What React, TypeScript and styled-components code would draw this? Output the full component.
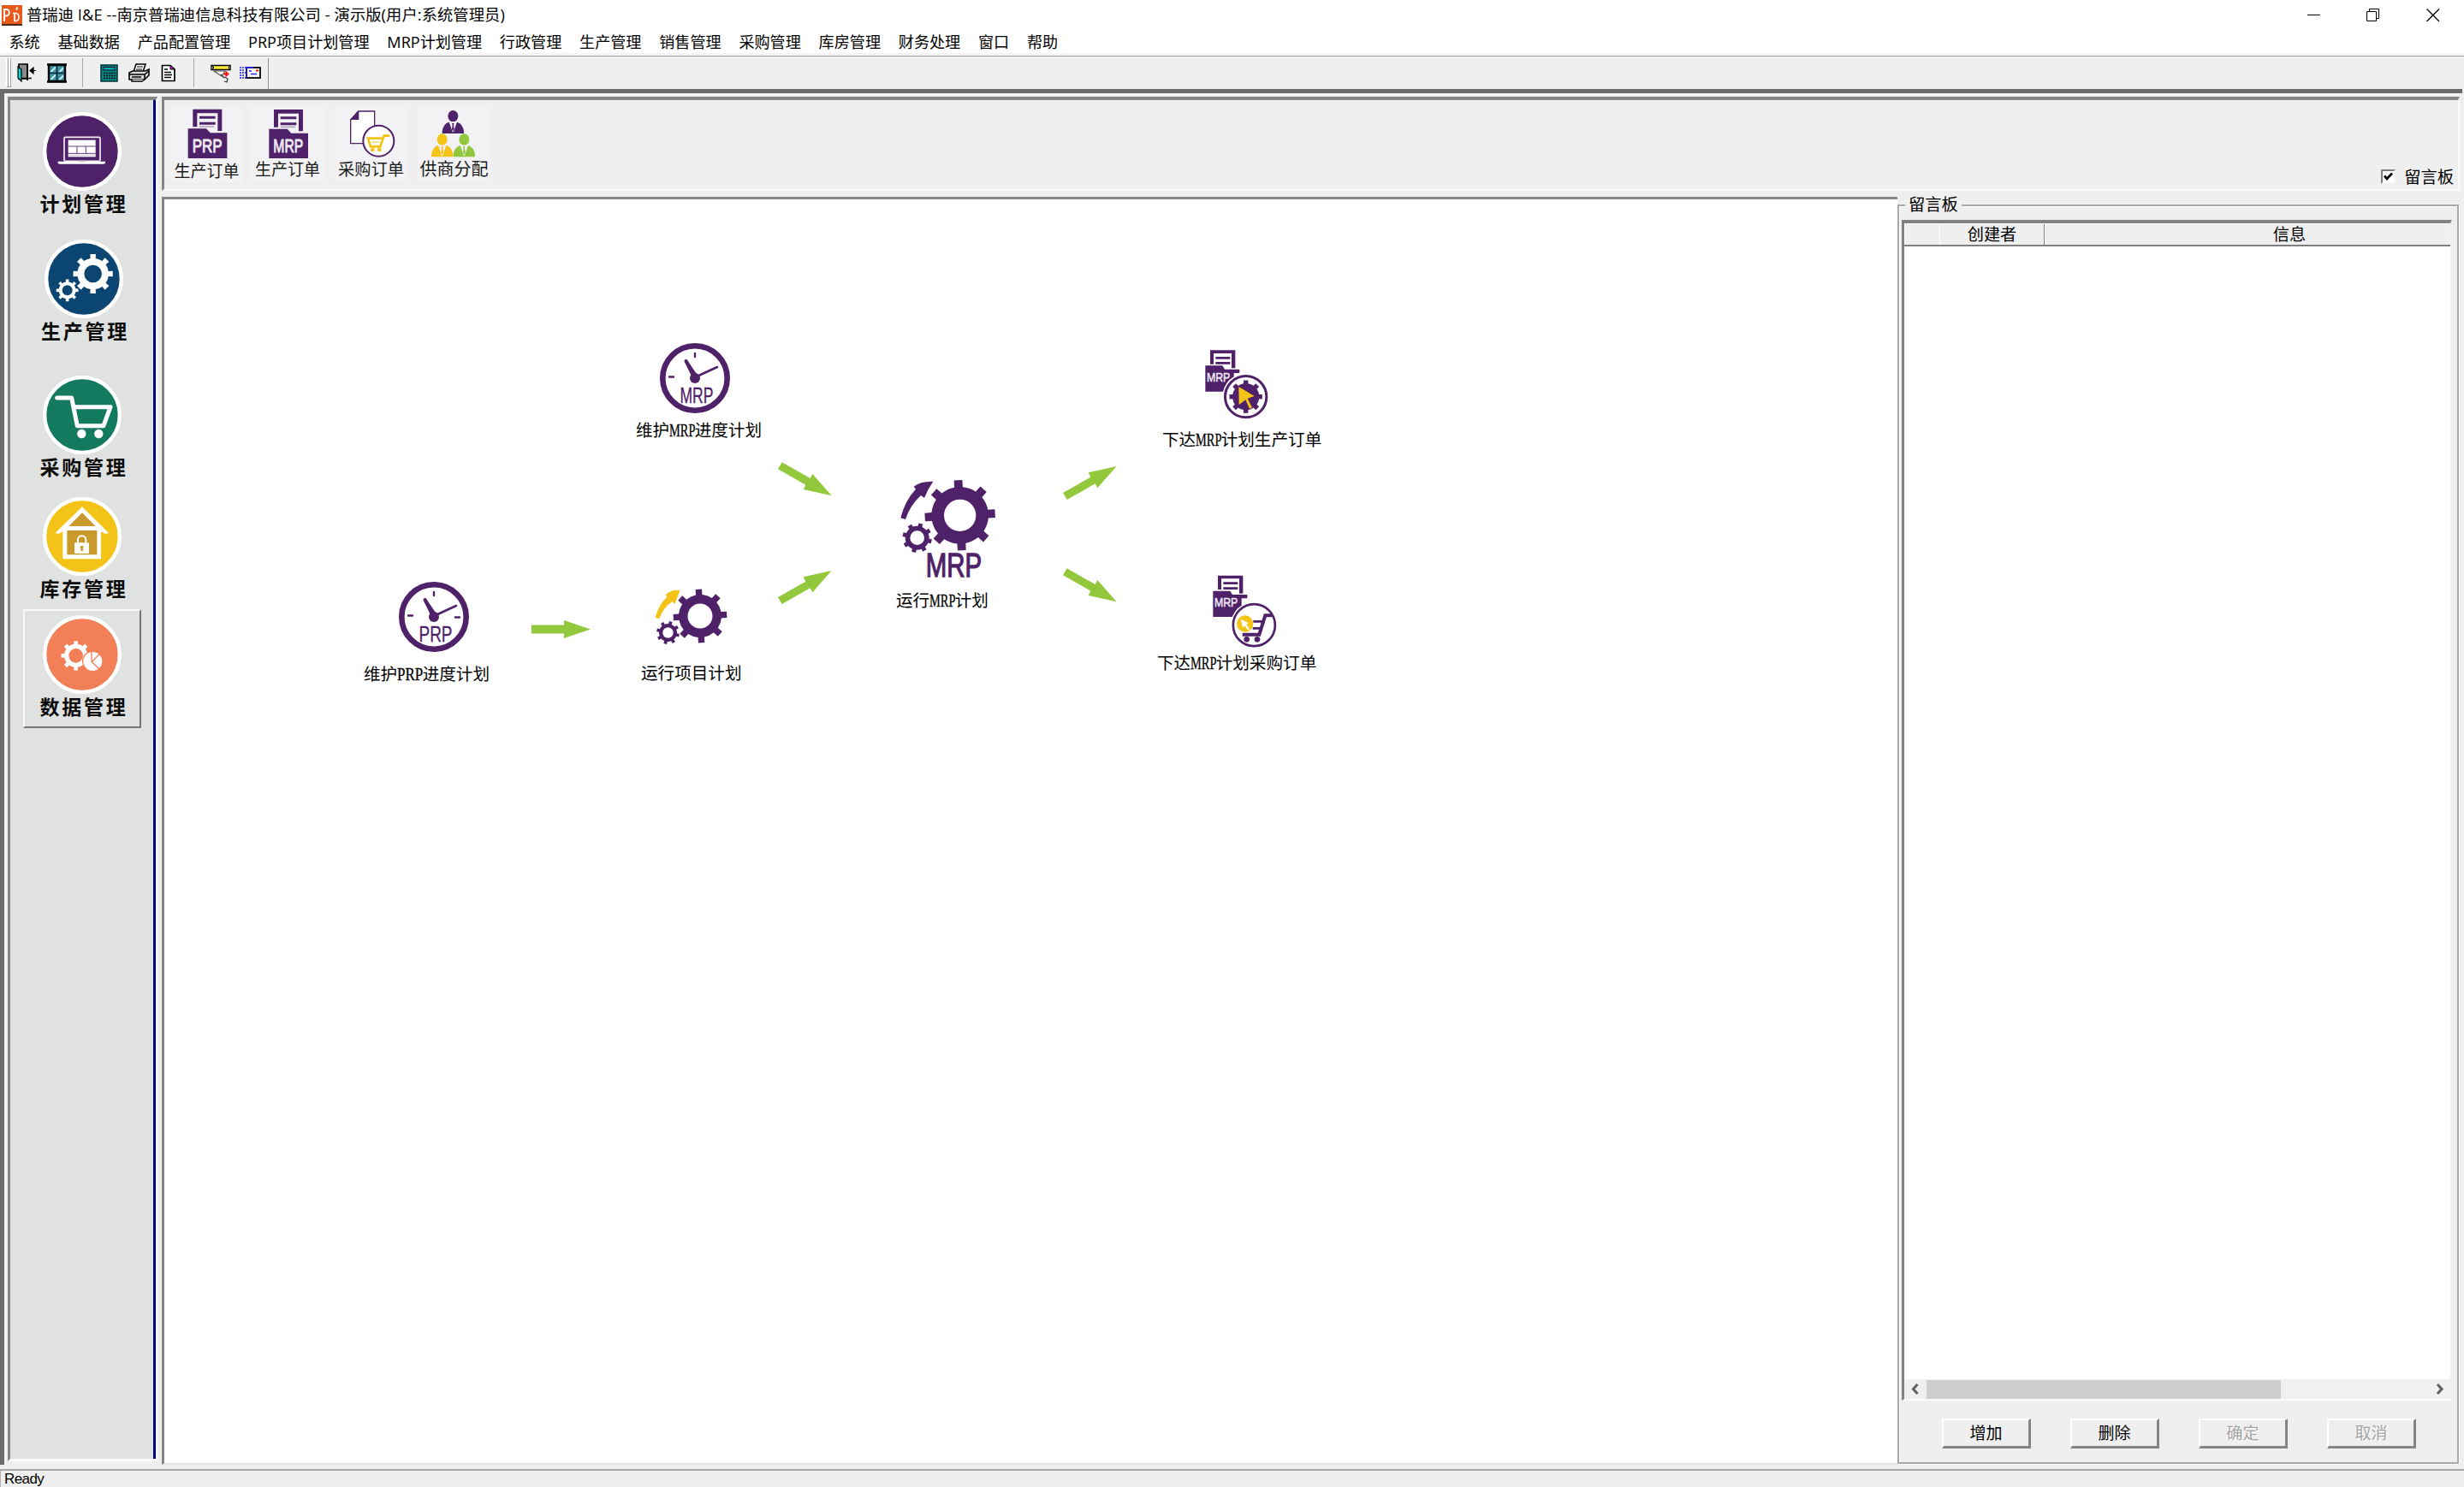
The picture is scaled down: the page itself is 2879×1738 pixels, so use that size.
import React from "react";
import styled, { createGlobalStyle, css } from "styled-components";

const PURPLE = "#4f2169";
const GREEN = "#93c83d";
const YELLOW = "#f3c417";
const FACE = "#efefef";
const CJK = `"Noto Sans CJK SC", sans-serif`;

const GlobalStyle = createGlobalStyle`
  * { box-sizing: border-box; }
  body { margin: 0; background: ${FACE}; }
`;

/* ---------- window frame ---------- */

const Window = styled.div`
  width: 2879px;
  height: 1738px;
  display: flex;
  flex-direction: column;
  overflow: hidden;
  background: ${FACE};
  color: #000;
  font: 18px/1 "Open Sans", ${CJK};
  white-space: nowrap;
`;

const TitleBar = styled.header`
  height: 35px;
  flex: none;
  display: flex;
  align-items: center;
  background: #fff;
  padding: 0 28px 0 2px;
`;

const Title = styled.h1`
  flex: 1;
  margin: -2px 0 0 5px;
  font: 400 18.3px/34px "Open Sans", ${CJK};
  letter-spacing: 0.07px;
`;

const WindowButtons = styled.div`
  display: flex;
  gap: 54px;
`;

const MenuBar = styled.nav`
  height: 27px;
  flex: none;
  display: flex;
  gap: 20.8px;
  padding-left: 10.5px;
  background: #fff;
  line-height: 28px;
  font-size: 18.1px;
`;

const Etch = styled.div`
  height: 6px;
  flex: none;
  border-top: 3px solid #f4f4f4;
  background: linear-gradient(#aaa 0 1px, #e2e2e2 1px 2px, #fff 2px);
`;

const ToolStrip = styled.div`
  height: 36px;
  flex: none;
  display: flex;
  align-items: flex-start;
  padding-left: 7px;
`;

const Grip = styled.i`
  width: 6px;
  height: 34px;
  border: solid #a0a0a0;
  border-width: 0 1px 1px 1px;
  border-left-color: #fff;
  box-shadow: inset -2px 0 #fff, inset -3px 0 #a0a0a0;
`;

const ToolGroup = styled.div<{ $w: number; $end?: boolean }>`
  position: relative;
  width: ${(p) => p.$w}px;
  height: ${(p) => (p.$end ? 36 : 34)}px;
  border-right: 1px solid ${(p) => (p.$end ? "#8c8c8c" : "#a8a8a8")};
`;

const SmallIcon = styled.svg<{ $x: number }>`
  position: absolute;
  left: ${(p) => p.$x}px;
  top: 6px;
  width: 26px;
  height: 24px;
`;

/* ---------- workspace ---------- */

const Workspace = styled.main`
  height: 1608px;
  flex: none;
  display: flex;
  gap: 5px;
  margin-right: 2px;
  border-style: solid;
  border-color: #6b6b6b transparent transparent #6b6b6b;
  border-width: 5px 0 0 5px;
  box-shadow: inset 2px 2px #f4f4f4;
  padding: 4px 3px 0 4px;
`;

const Sidebar = styled.aside`
  width: 175px;
  height: 1595px;
  flex: none;
  border: solid;
  border-width: 4px 2px 3px 3px;
  border-color: #858585 #f8f8f8 #fafafa #858585;
  background: #e0e2e1;
  box-shadow: inset -3px 0 #000082;
  padding: 7px 0 0 15px;
`;

const SideButton = styled.div<{ $gap: number; $active?: boolean }>`
  width: 138px;
  height: 139px;
  margin-top: ${(p) => p.$gap}px;
  border: solid transparent;
  border-width: 2px;
  display: flex;
  flex-direction: column;
  align-items: center;
  ${(p) =>
    p.$active &&
    css`
      border-color: #fafafa #767676 #767676 #fafafa;
    `}
`;

const SideIcon = styled.svg<{ $shift?: number }>`
  width: 94px;
  height: 94px;
  flex: none;
  margin: 4px 0 0 ${(p) => p.$shift ?? 0}px;
`;

const SideLabel = styled.span<{ $shift?: number }>`
  margin: -1px 0 0 ${(p) => 4 + (p.$shift ?? 0)}px;
  font: 700 23px/28px ${CJK};
  letter-spacing: 2.7px;
  color: #0c0c0c;
`;

const Main = styled.section`
  flex: 1;
  display: flex;
  flex-direction: column;
  gap: 7px;
`;

const Shelf = styled.div`
  height: 110px;
  flex: none;
  display: flex;
  border: solid;
  border-width: 4px 2px 2px 3px;
  border-color: #858585 #fafafa #fafafa #858585;
  padding: 5px 6px 4px 7px;
`;

const ShelfTile = styled.div<{ $gap: number; $lift: number }>`
  width: 85px;
  height: 89px;
  margin: ${(p) => 3 - p.$lift}px 0 0 ${(p) => p.$gap}px;
  background: #f2f2f4;
  display: flex;
  flex-direction: column;
  align-items: center;
`;

const ShelfIcon = styled.svg`
  width: 85px;
  height: 62px;
  flex: none;
`;

const ShelfLabel = styled.span<{ $size: number }>`
  font: 400 ${(p) => p.$size}px/24px ${CJK};
  color: #1a1a1a;
`;

const BoardToggle = styled.label`
  margin: auto -1px -1px auto;
  display: flex;
  align-items: center;
  gap: 10px;
  font: 19.3px/24px ${CJK};
`;

const CheckBox = styled.span`
  width: 17px;
  height: 17px;
  background: #fff;
  border: 2px solid;
  border-color: #7c7c7c #f6f6f6 #f6f6f6 #7c7c7c;
  display: flex;
  svg {
    width: 13px;
    height: 13px;
  }
`;

const Panes = styled.div`
  flex: 1;
  display: flex;
`;

const Canvas = styled.div`
  position: relative;
  width: 2028px;
  height: 1482px;
  background: #fff;
  border: solid;
  border-width: 3px 0 2px 3px;
  border-color: #858585 #fff #e4e4e4 #858585;
`;

const Node = styled.svg<{ $x: number; $y: number; $w: number; $h: number }>`
  position: absolute;
  left: ${(p) => p.$x - 192}px;
  top: ${(p) => p.$y - 233.5}px;
  width: ${(p) => p.$w}px;
  height: ${(p) => p.$h}px;
  overflow: visible;
`;

const NodeLabel = styled.span<{ $x: number; $y: number }>`
  position: absolute;
  left: ${(p) => p.$x - 192}px;
  top: ${(p) => p.$y - 233 - 13}px;
  font: 19.6px/24px ${CJK};
`;

const Latin = styled.span<{ $scale: number }>`
  display: inline-block;
  width: 29.5px;
  transform: scaleX(${(p) => p.$scale});
  transform-origin: 0 50%;
  font-family: "Liberation Serif", serif;
  font-size: 20px;
  line-height: 20px;
  -webkit-text-stroke: 0.3px #000;
`;

/* ---------- message board ---------- */

const Board = styled.fieldset`
  position: relative;
  width: 656px;
  height: 1481px;
  margin: 0;
  padding: 17px 8px 0 5px;
  border: 0;
  display: flex;
  flex-direction: column;
  &::before {
    content: "";
    position: absolute;
    inset: 9px 0 0 0;
    border: 2px solid #a9a9a9;
    box-shadow: inset 1px 1px #fff, 1px 1px #fff;
    pointer-events: none;
  }
`;

const Legend = styled.span`
  position: absolute;
  left: 9px;
  top: -4px;
  padding: 0 4px;
  background: ${FACE};
  font: 19.3px/24px ${CJK};
`;

const Grid = styled.div`
  margin-top: 10px;
  width: 643px;
  height: 1380px;
  border: solid;
  border-width: 4px 2px 2px 3px;
  border-color: #828282 #f2f2f2 #fbfbfb #828282;
  background: #fff;
  display: flex;
  flex-direction: column;
`;

const GridHead = styled.div`
  display: grid;
  grid-template-columns: 41px 123px 572px;
  height: 27px;
  overflow: hidden;
  background: ${FACE};
  border-top: 1px solid #fff;
  border-bottom: 2px solid #7f7f7f;
`;

const HeadCell = styled.span<{ $edge?: string }>`
  text-align: center;
  font: 19.2px/22px ${CJK};
  border-right: 1px solid ${(p) => p.$edge ?? "transparent"};
  border-left: 1px solid #fff;
`;

const ScrollBar = styled.div`
  margin-top: auto;
  height: 23px;
  display: flex;
  align-items: center;
  background: #f0f0f0;
  svg {
    width: 26px;
    height: 23px;
  }
`;

const Thumb = styled.i`
  width: 414px;
  height: 22px;
  margin-right: auto;
  background: #cdcdcd;
`;

const Actions = styled.div`
  display: flex;
  gap: 46px;
  margin: 21px 0 0 47px;
`;

const PushButton = styled.button`
  width: 104px;
  height: 35px;
  padding: 0 0 2px;
  background: ${FACE};
  border: solid;
  border-width: 2px 3px 3px 2px;
  border-color: #fff #858585 #858585 #fff;
  border-radius: 0;
  font: 19px/26px ${CJK};
  color: #000;
  &:disabled {
    color: #a3a3a3;
    text-shadow: 1px 1px #fff;
  }
`;

const StatusBar = styled.footer`
  height: 26px;
  margin-top: 5px;
  flex: none;
  border-top: 2px solid #a8a8a8;
  border-left: 1px solid #b0b0b0;
  padding-left: 4px;
  font: 17px/20px "Liberation Sans", sans-serif;
  letter-spacing: -0.6px;
`;

/* ---------- drawings ---------- */

function gearPath(cx: number, cy: number, outer: number, body: number, hole: number, rot = 0, teeth = 8, tip = 0.3, root = 0.38) {
  const step = (Math.PI * 2) / teeth;
  const at = (r: number, a: number) => `${(cx + r * Math.sin(a)).toFixed(1)} ${(cy - r * Math.cos(a)).toFixed(1)}`;
  let d = "";
  for (let i = 0; i < teeth; i++) {
    const a = i * step + (rot * Math.PI) / 180;
    const t = (step * tip) / 2;
    const b = (step * root) / 2;
    d += `${i ? `A${body} ${body} 0 0 1 ` : "M"}${at(body, a - b)}L${at(outer, a - t)}L${at(outer, a + t)}L${at(body, a + b)}`;
  }
  d += `A${body} ${body} 0 0 1 ${at(body, (rot * Math.PI) / 180 - (step * root) / 2)}Z`;
  if (hole) d += `M${cx - hole} ${cy}a${hole} ${hole} 0 1 0 ${hole * 2} 0a${hole} ${hole} 0 1 0 ${-hole * 2} 0Z`;
  return d;
}

const Gear = (p: { args: Parameters<typeof gearPath>; fill: string }) => (
  <path d={gearPath(...p.args)} fill={p.fill} fillRule="evenodd" />
);

const Disc = ({ cx, cy, fill }: { cx: number; cy: number; fill: string }) => (
  <circle cx={cx} cy={cy} r={131.5} fill={fill} stroke="#fff" strokeWidth={13} />
);

const Word = (p: { x: number; y: number; w: number; size: number; fill: string; text: string; bold?: number }) => (
  <text
    x={p.x}
    y={p.y}
    textLength={p.w}
    lengthAdjust="spacingAndGlyphs"
    fontFamily="Liberation Sans, sans-serif"
    fontSize={p.size}
    fill={p.fill}
    stroke={p.fill}
    strokeWidth={p.bold ?? 0.5}
  >
    {p.text}
  </text>
);

const sideItems = [
  {
    label: "计划管理",
    gap: 0,
    box: "149 61 282 282",
    art: (
      <>
        <Disc cx={290} cy={202} fill={PURPLE} />
        <rect x={227} y={152} width={126} height={84} rx={4} fill="none" stroke="#f3eef6" strokeWidth={5} />
        <rect x={241} y={162} width={96} height={59} fill="#fff" />
        <path d="M241 184H337M241 209H337M272 184V209M303 184V209" stroke={PURPLE} strokeWidth={2.6} />
        <path d="M241 215H337" stroke="#b9a6c4" strokeWidth={2} />
        <path d="M205 237H371V243L366 246H210L205 243Z" fill="#fff" />
        <path d="M276 235H302" stroke="#b9a6c4" strokeWidth={4} />
      </>
    ),
  },
  {
    label: "生产管理",
    gap: 9.5,
    shift: 3,
    box: "154 506 282 282",
    art: (
      <>
        <Disc cx={295} cy={647} fill="#0b4572" />
        <Gear fill="#fff" args={[327, 629, 70, 55, 31, 0, 8, 0.36, 0.42]} />
        <Gear fill="#fff" args={[237, 687, 39, 30, 18, 0, 8, 0.36, 0.44]} />
      </>
    ),
  },
  {
    label: "采购管理",
    gap: 20.5,
    box: "149 984 282 282",
    art: (
      <>
        <Disc cx={290} cy={1125} fill="#147a5f" />
        <path d="M202 1065H253L273 1163H365L389 1097H262" fill="none" stroke="#fff" strokeWidth={15} strokeLinecap="round" strokeLinejoin="round" />
        <circle cx={288} cy={1191} r={15.5} fill="#fff" />
        <circle cx={348} cy={1191} r={15.5} fill="#fff" />
      </>
    ),
  },
  {
    label: "库存管理",
    gap: 3,
    box: "149 61 282 282",
    art: (
      <>
        <Disc cx={290} cy={202} fill={YELLOW} />
        <path d="M290 98L384 191L370 192L356 185V281H222V185L208 192L195 191Z" fill="#fff" />
        <path d="M290 119L337 166H243ZM237 181H342V266H237Z" fill="#ca992c" />
        <path d="M275 228V214A14 14 0 0 1 303 214V228" fill="none" stroke="#fff" strokeWidth={6} />
        <rect x={263} y={224} width={51} height={38} rx={4} fill="#fff" />
        <path d="M289 234a6 6 0 0 1 3 11l1 8h-8l1-8a6 6 0 0 1 3-11Z" fill="#ca992c" />
      </>
    ),
  },
  {
    label: "数据管理",
    gap: -1,
    active: true,
    box: "149 474 282 282",
    art: (
      <>
        <Disc cx={290} cy={615} fill="#f37f57" />
        <Gear fill="#fff" args={[268, 619, 52, 41, 25, 0, 8, 0.36, 0.42]} />
        <circle cx={327} cy={639} r={37} fill="#f37f57" />
        <circle cx={327} cy={639} r={33} fill="#fff" />
        <path d="M323 604V640L350 666M325 640L352 612" stroke="#f37f57" strokeWidth={4} fill="none" />
      </>
    ),
  },
];

const FolderArt = ({ x, y, word }: { x: number; y: number; word: string }) => (
  <g transform={`translate(${x} ${y})`}>
    <path d="M17 62V0H119V76H104V14H32V62Z" fill={PURPLE} />
    <path d="M40 29H96M40 50H96" stroke={PURPLE} strokeWidth={9} />
    <path d="M40 61H92" stroke="#b4a3c0" strokeWidth={5} />
    <path d="M0 68H64L78 83H137V172H0Z" fill={PURPLE} />
    <Word x={15} y={150} w={105} size={66} fill="#efeaf2" text={word} bold={3} />
  </g>
);

const Person = ({ x, y, fill }: { x: number; y: number; fill: string }) => (
  <g transform={`translate(${x} ${y})`} fill={fill}>
    <ellipse cx={0} cy={20} rx={18} ry={20} />
    <path d="M-38 81V74Q-34 46 -14 41L0 73L14 41Q34 46 38 74V81Z" />
    <path d="M-13 41H13L2 76H-2Z" fill="#f2f2f4" />
    <path d="M-4 45H4L2 51L4 66L0 74L-4 66L-2 51Z" />
  </g>
);

const shelfItems = [
  { label: "生产订单", gap: 0, lift: 0, size: 19, box: "57 45 255 186", art: <FolderArt x={119} y={53} word="PRP" /> },
  { label: "生产订单", gap: 9.5, lift: 2, size: 19, box: "342 39 255 186", art: <FolderArt x={403} y={54} word="MRP" /> },
  {
    label: "采购订单",
    gap: 12.5,
    lift: 2,
    size: 19.3,
    box: "635 39 255 186",
    art: (
      <>
        <path d="M718 60H775V173H691V90Z" fill="#fff" stroke={PURPLE} strokeWidth={4} />
        <path d="M720 58V90H689Z" fill={PURPLE} />
        <circle cx={789} cy={164} r={54} fill="#fff" stroke={PURPLE} strokeWidth={6} />
        <path d="M828 146H808L795 184H761L752 155H802" fill="none" stroke={YELLOW} strokeWidth={8} />
        <path d="M764 168H798" stroke="#f8dc7a" strokeWidth={4} />
        <circle cx={768} cy={195} r={7} fill={YELLOW} />
        <circle cx={792} cy={195} r={7} fill={YELLOW} />
      </>
    ),
  },
  {
    label: "供商分配",
    gap: 12,
    lift: 2,
    size: 20,
    box: "928 39 255 186",
    art: (
      <>
        <Person x={1052} y={57} fill={PURPLE} />
        <Person x={1014} y={139} fill={YELLOW} />
        <Person x={1091} y={139} fill={GREEN} />
      </>
    ),
  },
];

const Clock = ({ x, y, word, right }: { x: number; y: number; word: string; right?: boolean }) => (
  <Node $x={x} $y={y} $w={82} $h={82} viewBox="0 0 82 82">
    <circle cx={41} cy={41} r={37.7} fill="#fff" stroke={PURPLE} strokeWidth={6.6} />
    <g stroke={PURPLE} strokeLinecap="round">
      <path d="M41 12V16M11 39.5H16" strokeWidth={2.4} />
      {right && <path d="M66 41.5H71" strokeWidth={2.4} />}
      <path d="M30.5 21L41 41" strokeWidth={4} />
      <path d="M41 40L67 28" strokeWidth={2.6} />
    </g>
    <path d="M29 21L38 41L45 39L32 20Z" fill={PURPLE} />
    <circle cx={41} cy={41} r={6} fill={PURPLE} />
    <Word x={23.5} y={69.5} w={39} size={25} fill={PURPLE} text={word} bold={0.3} />
  </Node>
);

const Slant = ({ x, y, down }: { x: number; y: number; down?: boolean }) => (
  <Node $x={x} $y={y} $w={62.7} $h={39.3} viewBox="0 0 188 118">
    <path
      d="M14 117L0 93L97 38L89 22L188 0L121 76L113 61Z"
      fill={GREEN}
      transform={down ? "translate(0 118) scale(1 -1)" : undefined}
    />
  </Node>
);

const MiniFolder = ({ x, y }: { x: number; y: number }) => (
  <g transform={`translate(${x} ${y})`}>
    <path d="M17 49V0H105V63H92V11H29V49Z" fill={PURPLE} />
    <path d="M36 27H87M36 45H87" stroke={PURPLE} strokeWidth={8} />
    <path d="M0 54H60L68 67H120V80H100V145H0Z" fill={PURPLE} />
    <Word x={5} y={109} w={82} size={46} fill="#efeaf2" text="MRP" bold={1.5} />
  </g>
);

const Caption = ({ x, y, pre, mid, post, scale = 0.72 }: { x: number; y: number; pre: string; mid?: string; post?: string; scale?: number }) => (
  <NodeLabel $x={x} $y={y}>
    {pre}
    {mid && <Latin $scale={scale}>{mid}</Latin>}
    {post}
  </NodeLabel>
);

const Diagram = () => (
  <Canvas>
    <Clock x={771} y={401} word="MRP" />
    <Caption x={743} y={503} pre="维护" mid="MRP" post="进度计划" />
    <Clock x={465.8} y={680.5} word="PRP" right />
    <Caption x={425} y={788} pre="维护" mid="PRP" post="进度计划" scale={0.85} />

    <Node $x={621} $y={725} $w={69} $h={21} viewBox="0 0 69 21">
      <path d="M0 5.5H38V0L69 10.5L38 21V15.5H0Z" fill={GREEN} />
    </Node>

    <Node $x={765} $y={688} $w={85} $h={65} viewBox="0 0 85 65">
      <path d="M0.5 34Q5 18 14.5 9.500L12.500 7.500Q18 1 29.500 2L23.500 18L20.500 15Q10 22 5.500 35Z" fill={YELLOW} />
      <Gear fill={PURPLE} args={[53, 32, 31.500, 25, 14.500, -3]} />
      <Gear fill={PURPLE} args={[15.500, 51.500, 13.500, 10.500, 6.200, 14, 8, 0.36, 0.46]} />
    </Node>
    <Caption x={749} y={787} pre="运行项目计划" />

    <Slant x={909} y={540.5} down />
    <Slant x={909} y={667} />

    <Node $x={1050} $y={560} $w={116} $h={120} viewBox="210 120 348 360">
      <path d="M217 256Q232 195 270 155L263 146Q285 127 331 128Q312 155 300 186L288 177Q250 212 234 261Z" fill={PURPLE} />
      <Gear fill={PURPLE} args={[425, 247, 124, 100, 56, -3]} />
      <Gear fill={PURPLE} args={[275, 326, 52, 42, 25, 14, 8, 0.36, 0.46]} />
      <Word x={305} y={461} w={196} size={118} fill={PURPLE} text="MRP" bold={4} />
    </Node>
    <Caption x={1047} y={702} pre="运行" mid="MRP" post="计划" />

    <Slant x={1242} y={545.5} />
    <Slant x={1242} y={664.500} down />

    <Node $x={1408} $y={409} $w={75} $h={81} viewBox="564 87 225 243">
      <MiniFolder x={565} y={88} />
      <circle cx={707} cy={251} r={82} fill="#fff" />
      <circle cx={707} cy={251} r={72.500} fill="#fff" stroke={PURPLE} strokeWidth={9} />
      <Gear fill={PURPLE} args={[707, 251, 58, 47, 0, 0, 8, 0.36, 0.44]} />
      <path d="M682 216L737 249L713 257L729 289L720 293L706 262L683 279Z" fill={YELLOW} />
    </Node>
    <Caption x={1358} y={514} pre="下达" mid="MRP" post="计划生产订单" />

    <Node $x={1416.700} $y={672} $w={75} $h={87} viewBox="590 877 225 261">
      <MiniFolder x={591} y={879} />
      <circle cx={735} cy={1053} r={82} fill="#fff" />
      <circle cx={735} cy={1053} r={73.500} fill="#fff" stroke={PURPLE} strokeWidth={8} />
      <path d="M798 1019H774L753 1086H694" fill="none" stroke={PURPLE} strokeWidth={12} />
      <path d="M732 1040H764M730 1064H756" stroke={PURPLE} strokeWidth={8} />
      <circle cx={709} cy={1103} r={10} fill={PURPLE} />
      <circle cx={746} cy={1103} r={10} fill={PURPLE} />
      <circle cx={703} cy={1048} r={29} fill={YELLOW} />
      <path d="M688 1032L715 1045L708 1050L719 1066L712 1070L702 1055L695 1062Z" fill="#fff" />
    </Node>
    <Caption x={1352} y={775} pre="下达" mid="MRP" post="计划采购订单" />
  </Canvas>
);

const menus = [
  "系统", "基础数据", "产品配置管理", "PRP项目计划管理", "MRP计划管理", "行政管理", "生产管理",
  "销售管理", "采购管理", "库房管理", "财务处理", "窗口", "帮助",
];

const AppLogo = () => (
  <svg width={24} height={24} viewBox="0 0 24 24">
    <rect width={24} height={24} fill="#e65a1e" />
    <rect y={22} width={24} height={2} fill="#4a2a20" />
    <path d="M3 19V5H6.500A3.500 4 0 0 1 6.500 12.500H3" fill="none" stroke="#fff" strokeWidth={1.800} />
    <path d="M15 9V18.500H16.500A3.500 4.500 0 0 0 16.500 9.500H13M17 5.500L18.500 2.500" fill="none" stroke="#fff" strokeWidth={1.700} />
  </svg>
);

const ToolIcons = () => (
  <ToolStrip>
    <Grip />
    <ToolGroup $w={84}>
      <SmallIcon $x={7} viewBox="0 0 26 24">
        <path d="M2 1H12V18H2Z" fill="#8a8a8a" stroke="#000" strokeWidth={1.600} />
        <path d="M1 4L5 7V21L1 17Z" fill="#12d5d5" stroke="#000" strokeWidth={1.200} />
        <path d="M6 17.500H17M12 1V20" stroke="#000" strokeWidth={1.600} />
        <path d="M16 8.500H22M19 5V12L15 8.500Z" stroke="#000" strokeWidth={1.200} fill="#000" />
      </SmallIcon>
      <SmallIcon $x={41} viewBox="0 0 26 24">
        <rect x={3} y={2} width={19} height={19} fill="#3f93a6" stroke="#000" strokeWidth={2.400} />
        <path d="M5 9L10 4H11V6L7 10H5ZM15 9L20 4V7L17 10H15ZM5 18L10 13H11V15L7 19H5ZM15 18L20 13V16L17 19H15Z" fill="#c4eef4" />
        <path d="M12.500 2V21M3 11.500H22" stroke="#0b2c38" strokeWidth={1.600} />
        <path d="M1 1.500H24M1 21.500H24" stroke="#000" strokeWidth={2.600} />
      </SmallIcon>
    </ToolGroup>
    <ToolGroup $w={130}>
      <SmallIcon $x={20} viewBox="0 0 26 24">
        <rect x={1} y={2} width={19} height={19} fill="#008080" stroke="#033" strokeWidth={1.500} />
        <rect x={4} y={4.500} width={13} height={3.500} fill="#0aa" stroke="#012" />
        <path d="M4 11.500H18M4 14.500H18M4 17.500H18" stroke="#011" strokeWidth={1.700} strokeDasharray="2 1" />
      </SmallIcon>
      <SmallIcon $x={53} viewBox="0 0 26 24">
        <path d="M6 10L9 1H20L17 10" fill="#fff" stroke="#000" strokeWidth={1.500} />
        <path d="M10 4H17M9 7H16" stroke="#000" strokeWidth={1.200} />
        <path d="M1 11L5 9H20L24 7V14L19 19H1Z" fill="#d8d8d8" stroke="#000" strokeWidth={1.600} />
        <path d="M1 13H19L24 9M19 13V19M4 16H15" stroke="#000" strokeWidth={1.500} fill="none" />
        <path d="M4 19V21H16L19 19" fill="#fff" stroke="#000" strokeWidth={1.500} />
      </SmallIcon>
      <SmallIcon $x={91} viewBox="0 0 26 24">
        <path d="M1.500 2.500H11L16 7V20.500H1.500Z" fill="#fff" stroke="#000" strokeWidth={1.700} />
        <path d="M11 2V7H16Z" fill="#e000e0" stroke="#000" />
        <path d="M4 7H8M4 10.500H12M4 13.500H13M4 16.500H12" stroke="#000" strokeWidth={1.500} />
      </SmallIcon>
    </ToolGroup>
    <ToolGroup $w={87} $end>
      <SmallIcon $x={19} viewBox="0 0 26 24">
        <path d="M1 2.500H23V7.500H1Z" fill="#f5e83b" stroke="#000" strokeWidth={1.500} />
        <path d="M1 2.500L4 5L1 8M23 2.500L21 5L23 8" stroke="#000" fill="#777" />
        <path d="M4 9L13 15L17 9Z" fill="#fff" stroke="#555" strokeWidth={1.200} />
        <path d="M12 13L16 17M16 16L20 18L19 22L16 21" stroke="#333" strokeWidth={1.200} fill="none" />
        <path d="M15.500 12.500H21.500M18.500 9.500V15.500" stroke="#f00" strokeWidth={2} />
      </SmallIcon>
      <SmallIcon $x={53} viewBox="0 0 26 24">
        <path d="M0 5H7M0 8H6M0 11H7M0 14H6M0 17H7" stroke="#22f" strokeWidth={1.500} strokeDasharray="2 1" />
        <rect x={8} y={5} width={16} height={12} fill="#fff" stroke="#000" strokeWidth={1.800} />
        <path d="M8 17V5H16" stroke="#22f" strokeWidth={1.500} fill="none" />
        <path d="M11 9H14M13 12.500H20" stroke="#22f" strokeWidth={1.600} />
        <path d="M19 8.500H22" stroke="#f00" strokeWidth={2} />
      </SmallIcon>
    </ToolGroup>
  </ToolStrip>
);

const MessageBoard = () => (
  <Board>
    <Legend>留言板</Legend>
    <Grid>
      <GridHead>
        <HeadCell />
        <HeadCell $edge="#7f7f7f">创建者</HeadCell>
        <HeadCell>信息</HeadCell>
      </GridHead>
      <ScrollBar>
        <svg viewBox="0 0 26 23"><path d="M15.500 6L10.500 11.500L15.500 17" fill="none" stroke="#606060" strokeWidth={3} /></svg>
        <Thumb />
        <svg viewBox="0 0 26 23"><path d="M11 6L16 11.500L11 17" fill="none" stroke="#606060" strokeWidth={3} /></svg>
      </ScrollBar>
    </Grid>
    <Actions>
      <PushButton>增加</PushButton>
      <PushButton>删除</PushButton>
      <PushButton disabled>确定</PushButton>
      <PushButton disabled>取消</PushButton>
    </Actions>
  </Board>
);

export default function App() {
  return (
    <Window lang="zh-CN">
      <GlobalStyle />
      <TitleBar>
        <AppLogo />
        <Title>普瑞迪 I&amp;E --南京普瑞迪信息科技有限公司 - 演示版(用户:系统管理员)</Title>
        <WindowButtons>
          <svg width={15} height={16}><path d="M0 7.500H15" stroke="#000" /></svg>
          <svg width={16} height={16} fill="none" stroke="#000">
            <path d="M0.500 3.500H11.500V14.500H0.500ZM3.500 3.500V0.500H14.500V11.500H11.500" />
          </svg>
          <svg width={16} height={16}><path d="M0.500 0.500L15 15M15 0.500L0.500 15" stroke="#000" strokeWidth={1.300} /></svg>
        </WindowButtons>
      </TitleBar>
      <MenuBar>
        {menus.map((m) => (
          <span key={m}>{m}</span>
        ))}
      </MenuBar>
      <Etch />
      <ToolIcons />
      <Workspace>
        <Sidebar>
          {sideItems.map((s) => (
            <SideButton key={s.label} $gap={s.gap} $active={s.active}>
              <SideIcon viewBox={s.box} $shift={s.shift}>{s.art}</SideIcon>
              <SideLabel $shift={s.shift}>{s.label}</SideLabel>
            </SideButton>
          ))}
        </Sidebar>
        <Main>
          <Shelf>
            {shelfItems.map((s, i) => (
              <ShelfTile key={i} $gap={s.gap} $lift={s.lift}>
                <ShelfIcon viewBox={s.box}>{s.art}</ShelfIcon>
                <ShelfLabel $size={s.size}>{s.label}</ShelfLabel>
              </ShelfTile>
            ))}
            <BoardToggle>
              <CheckBox>
                <svg viewBox="0 0 13 13"><path d="M2 5.500L5 9L11 2.500" fill="none" stroke="#000" strokeWidth={2.800} /></svg>
              </CheckBox>
              留言板
            </BoardToggle>
          </Shelf>
          <Panes>
            <Diagram />
            <MessageBoard />
          </Panes>
        </Main>
      </Workspace>
      <StatusBar>Ready</StatusBar>
    </Window>
  );
}
